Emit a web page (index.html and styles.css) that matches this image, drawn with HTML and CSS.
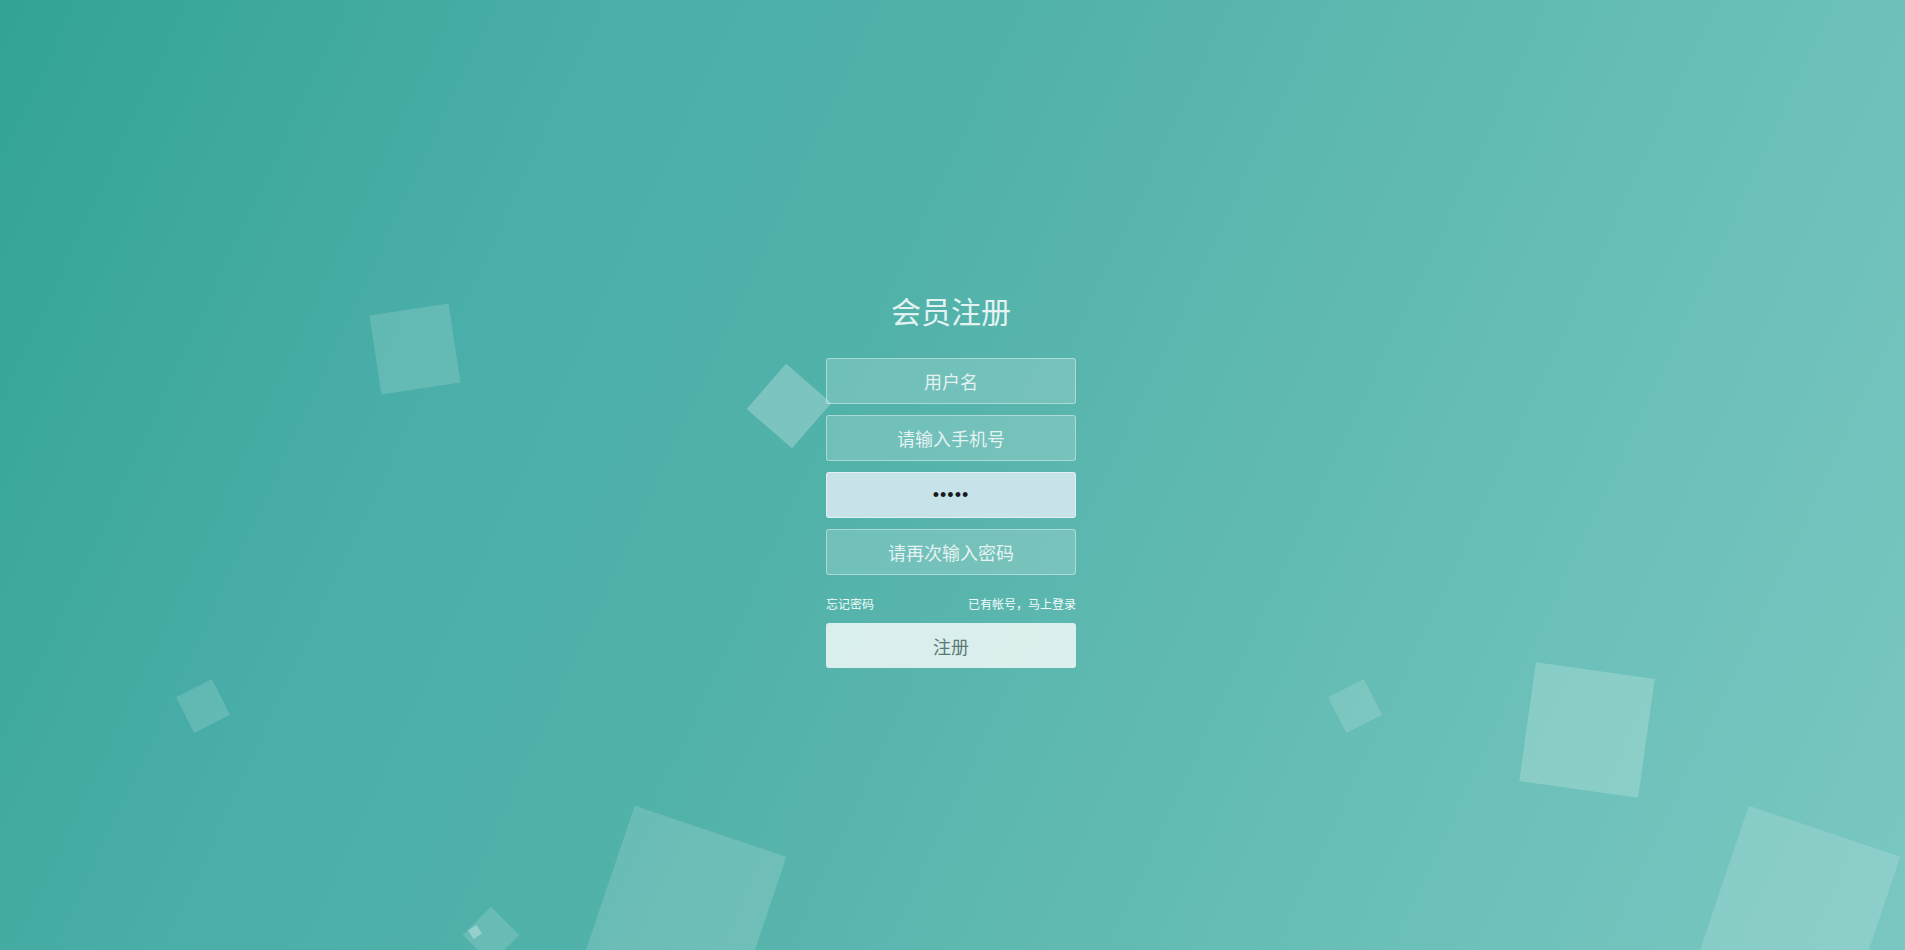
FILE: index.html
```html
<!DOCTYPE html>
<html lang="zh-CN">
<head>
<meta charset="utf-8">
<title>会员注册</title>
<link rel="stylesheet" href="styles.css">
</head>
<body>
<div class="wrapper">
  <div class="container">
    <h1 class="title">会员注册</h1>
    <form class="form">
      <input class="field" type="text" placeholder="用户名">
      <input class="field" type="text" placeholder="请输入手机号">
      <input class="field field-filled" type="password" value="12345">
      <input class="field" type="password" placeholder="请再次输入密码">
      <div class="links">
        <a class="link" href="#">忘记密码</a>
        <a class="link" href="#">已有帐号，马上登录</a>
      </div>
      <button class="submit" type="button">注册</button>
    </form>
  </div>
  <ul class="bubbles">
    <li class="bubble b-a"></li>
    <li class="bubble b-b"></li>
    <li class="bubble b-c"></li>
    <li class="bubble b-d"></li>
    <li class="bubble b-tiny"></li>
    <li class="bubble b-e"></li>
    <li class="bubble b-f"></li>
    <li class="bubble b-g"></li>
    <li class="bubble b-h"></li>
  </ul>
</div>
</body>
</html>
```
FILE: styles.css
```css
html, body {
  margin: 0;
  padding: 0;
  height: 100%;
}

body {
  font-family: "Noto Sans CJK SC", "Microsoft YaHei", sans-serif;
  overflow: hidden;
  background: #4fb0a8;
}

.wrapper {
  position: relative;
  height: 100vh;
  overflow: hidden;
  background: linear-gradient(115deg,
    #33a397 0%,
    #41aaa0 15%,
    #4aaea9 26%,
    #51b2aa 44%,
    #56b4ac 50%,
    #67beb6 73%,
    #6dc1ba 81%,
    #7ac7c1 100%);
}

.container {
  position: relative;
  z-index: 2;
  display: flex;
  flex-direction: column;
  align-items: center;
  padding-top: 295px;
  padding-right: 3px;
}

.title {
  margin: 0 0 33px;
  font-size: 30px;
  line-height: 30px;
  font-weight: 400;
  color: rgba(255, 255, 255, 0.86);
  letter-spacing: 0;
}

.form {
  display: flex;
  flex-direction: column;
  width: 250px;
  margin: 0;
}

.field {
  box-sizing: border-box;
  width: 250px;
  height: 46px;
  margin: 0 0 11px;
  padding: 0 15px;
  border: 1px solid rgba(255, 255, 255, 0.4);
  border-radius: 3px;
  background: rgba(255, 255, 255, 0.18);
  font-family: "Noto Sans CJK SC", "Microsoft YaHei", sans-serif;
  font-size: 18px;
  color: #ffffff;
  text-align: center;
  outline: none;
}

.field:last-of-type {
  margin-bottom: 0;
}

.field::placeholder {
  color: rgba(255, 255, 255, 0.82);
}

.field-filled {
  background: #c7e3e9;
  border-color: rgba(255, 255, 255, 0.5);
  color: #1a1a1a;
  font-family: "Liberation Sans", sans-serif;
  letter-spacing: 1px;
}

.links {
  display: flex;
  justify-content: space-between;
  margin: 23px 0 13px;
  height: 12px;
  line-height: 12px;
}

.link {
  font-size: 12px;
  color: #f2fbf9;
  text-decoration: none;
}

.submit {
  box-sizing: border-box;
  width: 250px;
  height: 45px;
  padding: 0;
  border: 0;
  border-radius: 3px;
  background: rgba(255, 255, 255, 0.78);
  font-family: "Noto Sans CJK SC", "Microsoft YaHei", sans-serif;
  font-size: 18px;
  color: #5b7a76;
  cursor: pointer;
}

.bubbles {
  position: absolute;
  top: 0;
  left: 0;
  width: 100%;
  height: 100%;
  margin: 0;
  padding: 0;
  z-index: 1;
  list-style: none;
}

.bubble {
  position: absolute;
  display: block;
  background-color: rgba(255, 255, 255, 0.15);
}

.b-a { width: 80px; height: 80px; left: 375px; top: 309px; transform: rotate(-8.6deg); }
.b-b { width: 60px; height: 60px; left: 759px; top: 376px; transform: rotate(41deg); background-color: rgba(255, 255, 255, 0.25); }
.b-c { width: 40px; height: 40px; left: 183px; top: 686px; transform: rotate(-27deg); }
.b-d { width: 40px; height: 40px; left: 471px; top: 915px; transform: rotate(45deg); }
.b-tiny { width: 10px; height: 10px; left: 470px; top: 927px; transform: rotate(-33deg); background-color: rgba(255, 255, 255, 0.3); }
.b-e { width: 160px; height: 160px; left: 605px; top: 827px; transform: rotate(18.6deg); }
.b-f { width: 40px; height: 40px; left: 1335px; top: 686px; transform: rotate(-27deg); }
.b-g { width: 120px; height: 120px; left: 1527px; top: 670px; transform: rotate(8deg); background-color: rgba(255, 255, 255, 0.2); }
.b-h { width: 160px; height: 160px; left: 1719px; top: 827px; transform: rotate(18.6deg); }
```
